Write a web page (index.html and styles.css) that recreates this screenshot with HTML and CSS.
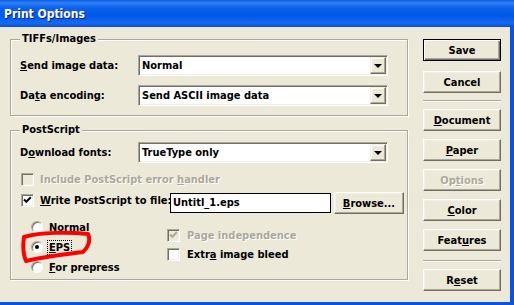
FILE: index.html
```html
<!DOCTYPE html>
<html lang="en">
<head>
    <meta charset="UTF-8">
    <title>Print Options</title>
    <link rel="stylesheet" href="styles.css">
</head>
<body>
<div class="window">
    <div class="titlebar">Print Options</div>

    <div class="client">
        <div class="left">

            <fieldset class="group group-tiffs">
                <legend>TIFFs/Images</legend>
                <div class="row first">
                    <span class="label"><u>S</u>end image data:</span>
                    <div class="combo"><span class="value">Normal</span><span class="drop"><i></i></span></div>
                </div>
                <div class="row">
                    <span class="label">Da<u>t</u>a encoding:</span>
                    <div class="combo"><span class="value">Send ASCII image data</span><span class="drop"><i></i></span></div>
                </div>
            </fieldset>

            <fieldset class="group group-ps">
                <legend>PostScript</legend>
                <div class="row first">
                    <span class="label">D<u>o</u>wnload fonts:</span>
                    <div class="combo"><span class="value">TrueType only</span><span class="drop"><i></i></span></div>
                </div>

                <div class="check-row disabled include">
                    <span class="checkbox"></span>
                    <span class="text">Include PostScript error <u>h</u>andler</span>
                </div>

                <div class="file-row">
                    <span class="checkbox"><svg viewBox="0 0 11 11" width="11" height="11"><path d="M2 4.5 L4.3 6.8 L8.8 2.3" /></svg></span>
                    <span class="text"><u>W</u>rite PostScript to file:</span>
                    <div class="edit">Untitl_1.eps</div>
                    <button class="btn browse"><u>B</u>rowse...</button>
                </div>

                <div class="options">
                    <div class="radios">
                        <div class="radio-row"><span class="radio"></span><span class="text"><u>N</u>ormal</span></div>
                        <div class="radio-row"><span class="radio on"></span><span class="text focus"><u>E</u>PS</span></div>
                        <div class="radio-row"><span class="radio"></span><span class="text"><u>F</u>or prepress</span></div>
                        <svg class="scribble" width="80" height="52" viewBox="0 0 80 52">
                            <path d="M3 20 C 20 15, 48 15, 67 17 C 70 23, 67 31, 62 35 C 48 37, 26 39, 5 44 C 2 37, 2 27, 3 20" />
                        </svg>
                    </div>
                    <div class="checks">
                        <div class="check-row disabled">
                            <span class="checkbox"><svg viewBox="0 0 11 11" width="11" height="11"><path d="M2 4.5 L4.3 6.8 L8.8 2.3" /></svg></span>
                            <span class="text">Page independence</span>
                        </div>
                        <div class="check-row">
                            <span class="checkbox"></span>
                            <span class="text">Extr<u>a</u> image bleed</span>
                        </div>
                    </div>
                </div>
            </fieldset>

        </div>

        <div class="buttons">
            <button class="btn default">Save</button>
            <button class="btn cancel">Cancel</button>
            <div class="sep"></div>
            <button class="btn"><u>D</u>ocument</button>
            <button class="btn"><u>P</u>aper</button>
            <button class="btn disabled">Op<u>t</u>ions</button>
            <button class="btn"><u>C</u>olor</button>
            <button class="btn">Feat<u>u</u>res</button>
            <div class="sep lower"></div>
            <button class="btn">R<u>e</u>set</button>
        </div>
    </div>
</div>
</body>
</html>
```

FILE: styles.css
```css
:root {
    --face: #ECE9D8;
    --shadow: #ACA899;
    --dark: #716F64;
    --light: #F1EFE2;
    --frame: #0A52E0;
}

* {
    box-sizing: border-box;
}

body {
    margin: 0;
    font-family: "DejaVu Sans Condensed", "DejaVu Sans", sans-serif;
    font-stretch: condensed;
    font-size: 11px;
    font-weight: bold;
    color: #000;
}

.window {
    width: 514px;
    height: 305px;
    background: var(--face);
    border-right: 4px solid var(--frame);
    border-bottom: 3px solid var(--frame);
    display: flex;
    flex-direction: column;
}

.titlebar {
    height: 27px;
    margin-right: -4px;
    padding-left: 4px;
    display: flex;
    align-items: center;
    color: #fff;
    font-size: 12px;
    text-shadow: 1px 1px 0 #0A1E8A;
    background: linear-gradient(to bottom, #0A5ADB 0%, #2E80F8 10%, #0D62EA 28%, #0058E8 60%, #166BF4 85%, #0A4DD3 100%);
}

.client {
    display: flex;
    gap: 15px;
    padding: 5px 0 0 10px;
}

.left {
    width: 398px;
}

/* group boxes */
.group {
    margin: 0;
    width: 398px;
    border: 1px solid var(--shadow);
    box-shadow: inset 1px 1px 0 #fff, 1px 1px 0 #fff;
    padding: 0 19px 9px 9px;
    min-width: 0;
}

.group legend {
    padding: 0 2px;
    line-height: 14px;
    background: var(--face);
}

.group-ps {
    margin-top: 7px;
    padding-bottom: 2px;
}

.row {
    display: flex;
    align-items: center;
    height: 21px;
    margin-top: 9px;
}

.group-ps .row.first {
    margin-top: 5px;
}

.label {
    width: 118px;
}

.combo {
    width: 250px;
    height: 21px;
    display: flex;
    padding: 1px;
    background: #fff;
    border: 1px solid;
    border-color: var(--shadow) #fff #fff var(--shadow);
    box-shadow: inset 1px 1px 0 var(--dark), inset -1px -1px 0 var(--light);
}

.combo .value {
    flex: 1;
    padding-left: 2px;
    line-height: 17px;
}

.drop {
    width: 16px;
    height: 17px;
    display: flex;
    align-items: center;
    justify-content: center;
    background: var(--face);
    border: 1px solid;
    border-color: var(--light) var(--dark) var(--dark) var(--light);
    box-shadow: inset -1px -1px 0 var(--shadow), inset 1px 1px 0 #fff;
}

.drop i {
    width: 0;
    height: 0;
    border-left: 4px solid transparent;
    border-right: 4px solid transparent;
    border-top: 4px solid #000;
    margin-top: 1px;
}

/* check boxes */
.checkbox {
    width: 13px;
    height: 13px;
    flex: none;
    display: flex;
    align-items: center;
    justify-content: center;
    background: #fff;
    border: 1px solid;
    border-color: var(--shadow) #fff #fff var(--shadow);
    box-shadow: inset 1px 1px 0 var(--dark), inset -1px -1px 0 var(--light);
}

.checkbox svg path {
    fill: none;
    stroke: #000;
    stroke-width: 2;
}

.check-row {
    display: flex;
    align-items: center;
    height: 13px;
    gap: 6px;
    margin-left: 1px;
}

.check-row.include {
    margin-top: 10px;
}

.disabled .checkbox {
    background: var(--face);
}

.disabled .checkbox svg path {
    stroke: var(--shadow);
}

.disabled .text,
.btn.disabled {
    color: var(--shadow);
    text-shadow: 1px 1px 0 #fff;
}

.file-row {
    display: flex;
    align-items: flex-start;
    height: 22px;
    margin-top: 6px;
    margin-left: 1px;
    margin-right: -16px;
}

.file-row > * {
    flex: none;
}

.file-row .checkbox {
    margin-top: 2px;
    margin-right: 6px;
}

.file-row .text {
    width: 130px;
    margin-top: 2px;
    white-space: nowrap;
}

.edit {
    width: 161px;
    height: 20px;
    margin-top: 1px;
    padding-left: 2px;
    line-height: 18px;
    background: #fff;
    border: 1px solid #000;
}

.btn {
    font: inherit;
    color: #000;
    width: 78px;
    height: 22px;
    padding: 0;
    background: var(--face);
    border: 1px solid;
    border-color: #fff var(--dark) var(--dark) #fff;
    box-shadow: inset -1px -1px 0 var(--shadow), inset 1px 1px 0 var(--light);
}

.btn.browse {
    width: 70px;
    margin-left: 3px;
}

/* radios and lower check boxes */
.options {
    display: flex;
    margin-top: 3px;
}

.radios {
    position: relative;
    width: 136px;
    margin-left: 11px;
}

.radio-row {
    display: flex;
    align-items: center;
    gap: 6px;
    height: 20px;
}

.radio {
    width: 12px;
    height: 12px;
    flex: none;
    border-radius: 50%;
    background: #fff;
    border: 1px solid;
    border-color: var(--shadow) #fff #fff var(--shadow);
    box-shadow: inset 1px 1px 0 var(--dark);
    display: flex;
    align-items: center;
    justify-content: center;
}

.radio.on::after {
    content: "";
    width: 4px;
    height: 4px;
    border-radius: 50%;
    background: #000;
}

.focus {
    outline: 1px dotted #000;
    outline-offset: 0;
    padding: 0 1px;
    margin-left: -1px;
}

.scribble {
    position: absolute;
    left: -10px;
    top: 0;
}

.scribble path {
    fill: none;
    stroke: #FF0000;
    stroke-width: 4;
    stroke-linecap: round;
    stroke-linejoin: round;
}

.checks {
    margin-top: 9px;
}

.checks .check-row {
    height: 19px;
    gap: 7px;
    margin-left: 0;
}

/* right button column */
.buttons {
    width: 78px;
    display: flex;
    flex-direction: column;
    padding-top: 7px;
}

.buttons .btn {
    margin-bottom: 8px;
}

.btn.default {
    border: 1px solid #000;
    box-shadow: inset 1px 1px 0 #fff, inset -1px -1px 0 var(--dark), inset -2px -2px 0 var(--shadow);
    margin-bottom: 10px;
}

.buttons .btn.cancel {
    margin-bottom: 7px;
}

.sep {
    height: 2px;
    border-top: 1px solid var(--shadow);
    border-bottom: 1px solid #fff;
    margin-bottom: 7px;
}

.sep.lower {
    margin-top: 1px;
}
```
